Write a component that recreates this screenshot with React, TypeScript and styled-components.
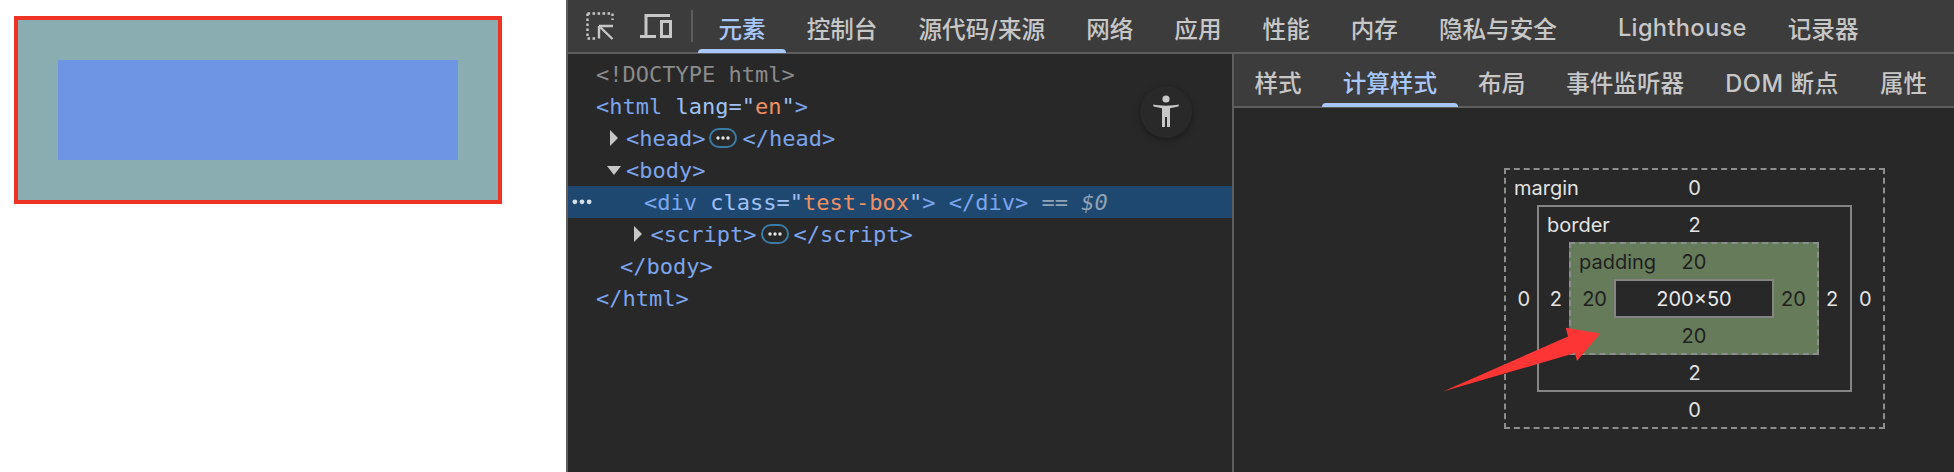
import React from "react";
import styled, { createGlobalStyle } from "styled-components";

const Global = createGlobalStyle`
  html, body { margin: 0; padding: 0; background: #fff; }
  #root { width: 1954px; height: 472px; overflow: hidden; }
`;

const Page = styled.div`
  position: relative;
  display: flex;
  width: 1954px;
  height: 472px;
  overflow: hidden;
`;
const Preview = styled.div`
  width: 566px;
  flex: none;
  padding: 16px 0 0 14px;
  box-sizing: border-box;
  background: #fff;
`;
const TestBox = styled.div`
  width: 400px;
  height: 100px;
  padding: 40px;
  border: 4px solid #ee3224;
  background: #8aadb1;
  background-clip: padding-box;
`;
const TestContent = styled.div`
  width: 100%;
  height: 100%;
  background: #6e94e4;
`;
const Dock = styled.div`
  flex: 1;
  display: flex;
  flex-direction: column;
  background: #282828;
  border-left: 2px solid #5e5e5e;
  min-width: 0;
`;
const MainBar = styled.div`
  height: 52px;
  flex: none;
  display: flex;
  align-items: stretch;
  background: #3c3c3c;
  border-bottom: 2px solid #5e5e5e;
`;
const ToolIcons = styled.div`
  display: flex;
  align-items: center;
  width: 130px;
  flex: none;
  padding-left: 18px;
  box-sizing: border-box;
`;
const ToolSep = styled.div`
  width: 2px;
  height: 32px;
  margin-left: 19px;
  background: #5e5e5e;
`;
const Tab = styled.div<{ $active?: boolean; $gap?: number; $track?: number }>`
  position: relative;
  display: flex;
  align-items: center;
  padding: 3px 20.5px 0;
  margin-left: ${(p) => p.$gap ?? 0}px;
  font-family: Inter, "Noto Sans CJK SC", sans-serif;
  font-size: 23.6px;
  font-weight: 500;
  letter-spacing: ${(p) => p.$track ?? 0}px;
  white-space: pre;
  color: ${(p) => (p.$active ? "#a8c7fa" : "#c7c7c7")};
  &::after {
    content: "";
    display: ${(p) => (p.$active ? "block" : "none")};
    position: absolute;
    left: 0;
    right: 0;
    bottom: -1px;
    height: 4px;
    border-radius: 4px 4px 0 0;
    background: #a8c7fa;
  }
`;
const Panels = styled.div`
  flex: 1;
  display: flex;
  min-height: 0;
`;
const ElementsPane = styled.div`
  position: relative;
  width: 664px;
  flex: none;
  padding-top: 4px;
  border-right: 2px solid #5e5e5e;
  font-family: "DejaVu Sans Mono", monospace;
  font-size: 22px;
`;
const Row = styled.div<{ $indent: number; $selected?: boolean }>`
  display: flex;
  align-items: center;
  height: 32px;
  padding-left: ${(p) => p.$indent}px;
  white-space: pre;
  color: #7ca5ee;
  background: ${(p) => (p.$selected ? "#1f4871" : "transparent")};
`;
const Doctype = styled.span`color: #8b8b8b;`;
const AttrName = styled.span`color: #9fc1f6;`;
const AttrValue = styled.span`color: #f09060;`;
const Muted = styled.span<{ $italic?: boolean }>`
  color: #8fa3b8;
  font-style: ${(p) => (p.$italic ? "italic" : "normal")};
`;
const Gutter = styled.span`
  display: flex;
  align-items: center;
  width: 72px;
  flex: none;
`;
const Twist = styled.svg<{ $gap: number }>`
  flex: none;
  margin-right: ${(p) => p.$gap}px;
`;
const Ellipsis = styled.span`
  display: flex;
  align-items: center;
  justify-content: center;
  width: 28px;
  height: 20px;
  box-sizing: border-box;
  margin: 0 5px 0 4px;
  border: 2px solid #3a7ba6;
  border-radius: 10px;
`;
const A11yButton = styled.div`
  position: absolute;
  left: 572px;
  top: 32px;
  width: 52px;
  height: 52px;
  display: flex;
  align-items: center;
  justify-content: center;
  border-radius: 50%;
  background: #292929;
  box-shadow: 0 2px 6px rgba(0, 0, 0, 0.35);
`;
const SidePane = styled.div`
  flex: 1;
  display: flex;
  flex-direction: column;
  min-width: 0;
`;
const SideBar = styled(MainBar)``;
const ModelArea = styled.div`
  flex: 1;
  padding: 60px 0 0 270px;
  font-family: Inter, sans-serif;
  font-size: 20px;
  color: #e3e3e3;
`;
const Level = styled.div<{ $kind: "margin" | "border" | "padding"; $w: number }>`
  display: flex;
  flex-direction: column;
  width: ${(p) => p.$w}px;
  border: 2px ${(p) => (p.$kind === "border" ? "solid" : "dashed")} ${(p) => (p.$kind === "border" ? "#858585" : "#8e8e8e")};
  background: ${(p) => (p.$kind === "padding" ? "#667b5a" : "transparent")};
  color: ${(p) => (p.$kind === "padding" ? "#1f1f1f" : "#e3e3e3")};
`;
const Edge = styled.div`
  display: grid;
  grid-template-columns: 1fr auto 1fr;
  align-items: center;
  height: 35px;
  padding: 0 8px;
`;
const EdgeLabel = styled.span`
  justify-self: start;
`;
const Middle = styled.div`
  display: flex;
  align-items: center;
`;
const Side = styled.div<{ $w: number; $at: "left" | "right" }>`
  width: ${(p) => p.$w}px;
  flex: none;
  box-sizing: border-box;
  text-align: ${(p) => (p.$at === "left" ? "right" : "left")};
  padding: 0 7px;
`;
const ContentBox = styled.div`
  width: 156px;
  height: 35px;
  border: 2px solid #858585;
  background: #282828;
  color: #e8e8e8;
  display: flex;
  align-items: center;
  justify-content: center;
`;
const Annotation = styled.svg`
  position: absolute;
  left: 0;
  top: 0;
  pointer-events: none;
`;

const Right = ({ gap }: { gap: number }) => (
  <Twist $gap={gap} width="8" height="16" viewBox="0 0 8 16">
    <path d="M0 0 L8 8 L0 16 Z" fill="#c7c7c7" />
  </Twist>
);
const Down = ({ gap }: { gap: number }) => (
  <Twist $gap={gap} width="14" height="9" viewBox="0 0 14 9">
    <path d="M0 0 L14 0 L7 9 Z" fill="#c7c7c7" />
  </Twist>
);
const Dots = ({ fill = "#e3e3e3", w = 14 }: { fill?: string; w?: number }) => (
  <svg width={w} height={(w * 4) / 14} viewBox="0 0 14 4">
    <circle cx="2" cy="2" r="1.7" fill={fill} />
    <circle cx="7" cy="2" r="1.7" fill={fill} />
    <circle cx="12" cy="2" r="1.7" fill={fill} />
  </svg>
);

const InspectIcon = () => (
  <svg width="28" height="28" viewBox="0 0 28 28" fill="none" stroke="#c7c7c7" strokeWidth="2.4">
    <path d="M1.5 1.5 H26.5 M26.5 1.5 V8" strokeDasharray="2.6 2.4" />
    <path d="M1.5 1.5 V26.5 H10" strokeDasharray="2.6 2.4" />
    <path d="M13 14 H27 M13 14 V26.5 M13 14 L26.5 27" />
  </svg>
);
const DeviceIcon = () => (
  <svg width="32" height="26" viewBox="0 0 32 26" fill="none" stroke="#c7c7c7" strokeWidth="3" style={{ marginLeft: 26 }}>
    <path d="M30 2.5 H6 V22" />
    <path d="M0 23.5 H16" />
    <rect x="21.5" y="8.5" width="9" height="15" strokeWidth="3" />
  </svg>
);
const A11yIcon = () => (
  <svg width="28" height="34" viewBox="0 0 28 34">
    <circle cx="14" cy="4" r="3.6" fill="#c7c7c7" />
    <path
      d="M1 9.5 L1.6 11.6 L10 13.3 V32 H13 V22 H15 V32 H18 V13.3 L26.4 11.6 L27 9.5 C19 11 9 11 1 9.5 Z"
      fill="#c7c7c7"
    />
  </svg>
);

const TopEdge = ({ label, value }: { label?: string; value: string }) => (
  <Edge>
    <EdgeLabel>{label}</EdgeLabel>
    <span>{value}</span>
    <span />
  </Edge>
);

export default function App() {
  return (
    <Page>
      <Global />
      <Preview>
        <TestBox>
          <TestContent />
        </TestBox>
      </Preview>
      <Dock>
        <MainBar>
          <ToolIcons>
            <InspectIcon />
            <DeviceIcon />
            <ToolSep />
          </ToolIcons>
          <Tab $active>元素</Tab>
          <Tab>控制台</Tab>
          <Tab>源代码/来源</Tab>
          <Tab>网络</Tab>
          <Tab>应用</Tab>
          <Tab>性能</Tab>
          <Tab>内存</Tab>
          <Tab>隐私与安全</Tab>
          <Tab $gap={20} $track={0.35}>Lighthouse</Tab>
          <Tab>记录器</Tab>
        </MainBar>
        <Panels>
          <ElementsPane>
            <Row $indent={28}><Doctype>{"<!DOCTYPE html>"}</Doctype></Row>
            <Row $indent={28}>
              <span>{"<html "}</span><AttrName>lang</AttrName><AttrName>="</AttrName><AttrValue>en</AttrValue><AttrName>"</AttrName><span>{">"}</span>
            </Row>
            <Row $indent={42}>
              <Right gap={8} /><span>{"<head>"}</span>
              <Ellipsis><Dots /></Ellipsis>
              <span>{"</head>"}</span>
            </Row>
            <Row $indent={39}>
              <Down gap={5} /><span>{"<body>"}</span>
            </Row>
            <Row $indent={4} $selected>
              <Gutter><Dots fill="#d5dde6" w={20} /></Gutter>
              <span>{"<div "}</span><AttrName>class</AttrName><AttrName>="</AttrName><AttrValue>test-box</AttrValue><AttrName>"</AttrName><span>{"> </div>"}</span><Muted> == </Muted><Muted $italic>$0</Muted>
            </Row>
            <Row $indent={66}>
              <Right gap={8.6} /><span>{"<script>"}</span>
              <Ellipsis><Dots /></Ellipsis>
              <span>{"</script>"}</span>
            </Row>
            <Row $indent={52}><span>{"</body>"}</span></Row>
            <Row $indent={28}><span>{"</html>"}</span></Row>
            <A11yButton><A11yIcon /></A11yButton>
          </ElementsPane>
          <SidePane>
            <SideBar>
              <Tab>样式</Tab>
              <Tab $active>计算样式</Tab>
              <Tab>布局</Tab>
              <Tab>事件监听器</Tab>
              <Tab $track={0.6}>DOM 断点</Tab>
              <Tab>属性</Tab>
            </SideBar>
            <ModelArea>
              <Level $kind="margin" $w={377}>
                <TopEdge label="margin" value="0" />
                <Middle>
                  <Side $w={31} $at="left">0</Side>
                  <Level $kind="border" $w={311}>
                    <TopEdge label="border" value="2" />
                    <Middle>
                      <Side $w={30} $at="left">2</Side>
                      <Level $kind="padding" $w={246}>
                        <TopEdge label="padding" value="20" />
                        <Middle>
                          <Side $w={43} $at="left">20</Side>
                          <ContentBox>200×50</ContentBox>
                          <Side $w={43} $at="right">20</Side>
                        </Middle>
                        <TopEdge value="20" />
                      </Level>
                      <Side $w={31} $at="right">2</Side>
                    </Middle>
                    <TopEdge value="2" />
                  </Level>
                  <Side $w={31} $at="right">0</Side>
                </Middle>
                <TopEdge value="0" />
              </Level>
            </ModelArea>
          </SidePane>
        </Panels>
      </Dock>
      <Annotation width="1954" height="472" viewBox="0 0 1954 472">
        <path d="M1443 391.5 L1568 336.5 L1565.7 327.7 L1600 333.5 L1577 361 L1575 353 Z" fill="#fd3535" />
      </Annotation>
    </Page>
  );
}
